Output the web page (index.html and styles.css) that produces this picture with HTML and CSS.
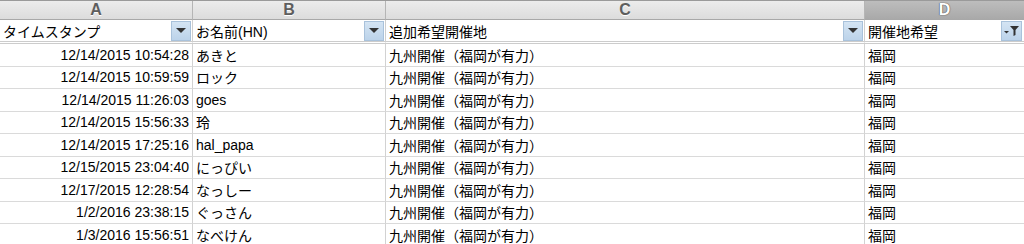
FILE: index.html
```html
<!DOCTYPE html>
<html lang="ja">
<head>
<meta charset="utf-8">
<link rel="stylesheet" href="styles.css">
</head>
<body>
<div class="sheet">
  <div class="colhead">A</div>
  <div class="colhead">B</div>
  <div class="colhead">C</div>
  <div class="colhead sel">D</div>

  <div class="field"><span>タイムスタンプ</span><span class="dd"><svg width="10" height="6" viewBox="0 0 10 6"><path d="M0 0H10L5 5Z" fill="#333"/></svg></span></div>
  <div class="field"><span>お名前(HN)</span><span class="dd"><svg width="10" height="6" viewBox="0 0 10 6"><path d="M0 0H10L5 5Z" fill="#333"/></svg></span></div>
  <div class="field"><span>追加希望開催地</span><span class="dd"><svg width="10" height="6" viewBox="0 0 10 6"><path d="M0 0H10L5 5Z" fill="#333"/></svg></span></div>
  <div class="field"><span>開催地希望</span><span class="dd flt"><svg width="16" height="12" viewBox="0 0 16 12"><path d="M0 6H5L2.5 8.5Z" fill="#333"/><path d="M6 1H15L11.5 5V10L9.5 11V5Z" fill="#333"/></svg></span></div>

  <div class="c num">12/14/2015 10:54:28</div><div class="c">あきと</div><div class="c jp">九州開催（福岡が有力）</div><div class="c">福岡</div>
  <div class="c num">12/14/2015 10:59:59</div><div class="c">ロック</div><div class="c jp">九州開催（福岡が有力）</div><div class="c">福岡</div>
  <div class="c num">12/14/2015 11:26:03</div><div class="c">goes</div><div class="c jp">九州開催（福岡が有力）</div><div class="c">福岡</div>
  <div class="c num">12/14/2015 15:56:33</div><div class="c">玲</div><div class="c jp">九州開催（福岡が有力）</div><div class="c">福岡</div>
  <div class="c num">12/14/2015 17:25:16</div><div class="c">hal_papa</div><div class="c jp">九州開催（福岡が有力）</div><div class="c">福岡</div>
  <div class="c num">12/15/2015 23:04:40</div><div class="c">にっぴい</div><div class="c jp">九州開催（福岡が有力）</div><div class="c">福岡</div>
  <div class="c num">12/17/2015 12:28:54</div><div class="c">なっしー</div><div class="c jp">九州開催（福岡が有力）</div><div class="c">福岡</div>
  <div class="c num">1/2/2016 23:38:15</div><div class="c">ぐっさん</div><div class="c jp">九州開催（福岡が有力）</div><div class="c">福岡</div>
  <div class="c num">1/3/2016 15:56:51</div><div class="c">なべけん</div><div class="c jp">九州開催（福岡が有力）</div><div class="c">福岡</div>
</div>
</body>
</html>
```

FILE: styles.css
```css
html, body {
  margin: 0;
  padding: 0;
  background: #fff;
  overflow: hidden;
}
.sheet {
  display: grid;
  grid-template-columns: 193px 193px 479px 159px;
  grid-template-rows: 19px 24px repeat(9, 22.5px);
  font-family: "Liberation Sans", "Noto Sans CJK JP", sans-serif;
  font-size: 14px;
  color: #000;
  border-top: 1px solid #9a9a9a;
}
.colhead {
  background: linear-gradient(#ececec, #dcdcdc);
  border-right: 1px solid #b5b5b5;
  border-bottom: 1px solid #a8a8a8;
  display: flex;
  align-items: center;
  justify-content: center;
  font-family: "Liberation Sans", sans-serif;
  font-weight: bold;
  font-size: 16px;
  line-height: 1;
  color: #5e5e5e;
  text-shadow: 0 1px 0 #fff;
  box-sizing: border-box;
}
.colhead.sel {
  background: linear-gradient(#bdbdbd, #a9a9a9);
  color: #fff;
  text-shadow: 0 0 1px #444, 0 0 1px #444;
  border-right: none;
}
.field {
  display: flex;
  align-items: center;
  justify-content: space-between;
  padding-left: 3px;
  border-right: 1px solid #cfcfcf;
  border-bottom: 3px double #cccccc;
  box-sizing: border-box;
}
.field:nth-child(8) { border-right: none; padding-right: 1px; }
.dd {
  width: 20px;
  height: 20px;
  box-sizing: border-box;
  background: linear-gradient(#d4e4f3, #bcd3ea);
  border: 1px solid #a9c2db;
  display: flex;
  align-items: center;
  justify-content: center;
  margin-right: 1px;
  align-self: flex-start;
  margin-top: 1px;
}
.dd.flt { width: 21px; }
.c {
  display: flex;
  align-items: center;
  padding-left: 3px;
  border-right: 1px solid #d2d2d2;
  border-bottom: 1px solid #dadada;
  box-sizing: border-box;
  white-space: nowrap;
  overflow: hidden;
}
.c.jp {
  font-family: "Noto Sans CJK JP", sans-serif;
  color: #000;
}
.c:nth-child(4n) { border-right: none; }
.c.num {
  justify-content: flex-end;
  padding-left: 0;
  padding-right: 3px;
}
```
